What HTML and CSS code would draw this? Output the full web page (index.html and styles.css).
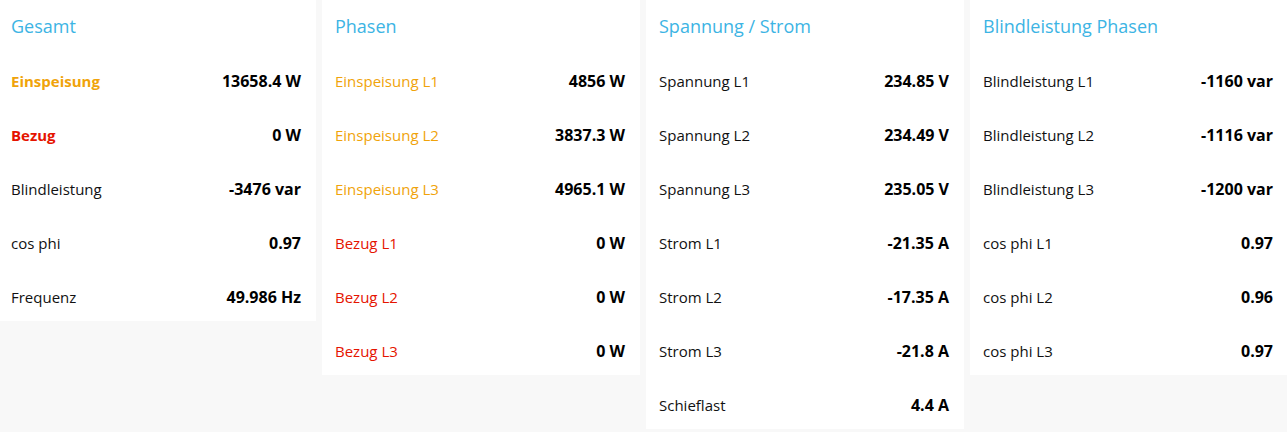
FILE: index.html
```html
<!DOCTYPE html>
<html lang="de">
<head>
<meta charset="utf-8">
<title>Zähler</title>
<link rel="stylesheet" href="styles.css">
</head>
<body>
<div class="grid">
  <section class="card">
    <h2 class="title">Gesamt</h2>
    <div class="row"><span class="label orange bold">Einspeisung</span><span class="value">13658.4 W</span></div>
    <div class="row"><span class="label red bold">Bezug</span><span class="value">0 W</span></div>
    <div class="row"><span class="label">Blindleistung</span><span class="value">-3476 var</span></div>
    <div class="row"><span class="label">cos phi</span><span class="value">0.97</span></div>
    <div class="row"><span class="label">Frequenz</span><span class="value">49.986 Hz</span></div>
  </section>
  <section class="card">
    <h2 class="title">Phasen</h2>
    <div class="row"><span class="label orange">Einspeisung L1</span><span class="value">4856 W</span></div>
    <div class="row"><span class="label orange">Einspeisung L2</span><span class="value">3837.3 W</span></div>
    <div class="row"><span class="label orange">Einspeisung L3</span><span class="value">4965.1 W</span></div>
    <div class="row"><span class="label red">Bezug L1</span><span class="value">0 W</span></div>
    <div class="row"><span class="label red">Bezug L2</span><span class="value">0 W</span></div>
    <div class="row"><span class="label red">Bezug L3</span><span class="value">0 W</span></div>
  </section>
  <section class="card">
    <h2 class="title">Spannung / Strom</h2>
    <div class="row"><span class="label">Spannung L1</span><span class="value">234.85 V</span></div>
    <div class="row"><span class="label">Spannung L2</span><span class="value">234.49 V</span></div>
    <div class="row"><span class="label">Spannung L3</span><span class="value">235.05 V</span></div>
    <div class="row"><span class="label">Strom L1</span><span class="value">-21.35 A</span></div>
    <div class="row"><span class="label">Strom L2</span><span class="value">-17.35 A</span></div>
    <div class="row"><span class="label">Strom L3</span><span class="value">-21.8 A</span></div>
    <div class="row"><span class="label">Schieflast</span><span class="value">4.4 A</span></div>
  </section>
  <section class="card">
    <h2 class="title">Blindleistung Phasen</h2>
    <div class="row"><span class="label">Blindleistung L1</span><span class="value">-1160 var</span></div>
    <div class="row"><span class="label">Blindleistung L2</span><span class="value">-1116 var</span></div>
    <div class="row"><span class="label">Blindleistung L3</span><span class="value">-1200 var</span></div>
    <div class="row"><span class="label">cos phi L1</span><span class="value">0.97</span></div>
    <div class="row"><span class="label">cos phi L2</span><span class="value">0.96</span></div>
    <div class="row"><span class="label">cos phi L3</span><span class="value">0.97</span></div>
  </section>
</div>
</body>
</html>
```
FILE: styles.css
```css
html, body {
  margin: 0;
  padding: 0;
  background: #f8f8f8;
  overflow: hidden;
}
body {
  font-family: "Open Sans", "Noto Sans", "Liberation Sans", sans-serif;
  color: #111;
}
.grid {
  display: grid;
  grid-template-columns: repeat(4, 318px);
  gap: 6px;
  align-items: start;
  margin-left: -2px;
}
.card {
  background: #fff;
  padding: 0 15px 0 13px;
}
.title {
  margin: 0;
  height: 51px;
  display: flex;
  align-items: center;
  font-size: 18px;
  font-weight: 400;
  color: #3cb4e4;
}
.row {
  height: 48px;
  padding-top: 6px;
  display: flex;
  align-items: center;
  justify-content: space-between;
  font-size: 15px;
}
.label { color: #111; }
.bold { font-weight: 700; }
.orange { color: #f0a30a; }
.red { color: #e51400; }
.value {
  font-size: 16px;
  font-weight: 700;
  color: #000;
}
```
